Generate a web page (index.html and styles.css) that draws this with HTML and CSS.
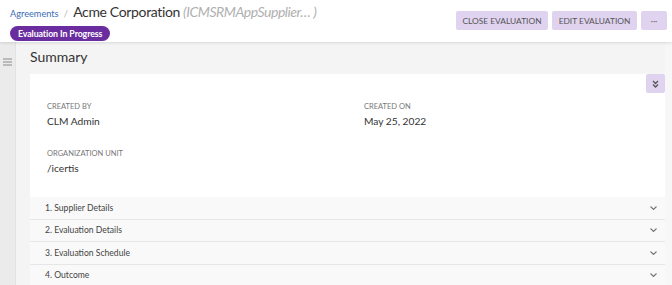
FILE: index.html
```html
<!DOCTYPE html>
<html lang="en">
<head>
    <meta charset="UTF-8">
    <title>Acme Corporation - Evaluation</title>
    <link rel="stylesheet" href="styles.css">
</head>
<body>
    <div class="header">
        <div class="title-block">
            <div class="crumbs">
                <a class="crumb-link" href="#">Agreements</a>
                <span class="crumb-sep">/</span>
                <span class="crumb-title">Acme Corporation</span>
                <span class="crumb-code">(ICMSRMAppSupplier… )</span>
            </div>
            <span class="status">Evaluation In Progress</span>
        </div>
        <div class="actions">
            <button class="btn close">CLOSE EVALUATION</button>
            <button class="btn edit">EDIT EVALUATION</button>
            <button class="btn more">&middot;&middot;&middot;</button>
        </div>
    </div>

    <div class="page">
        <div class="sidebar">
            <svg class="burger" width="9" height="8" viewBox="0 0 9 8">
                <path d="M0 1h9M0 4h9M0 7h9" stroke="#8a8a8a" stroke-width="1"/>
            </svg>
        </div>
        <div class="main">
            <h1 class="page-title">Summary</h1>
            <div class="card">
                <button class="collapse-all">
                    <svg width="7" height="8" viewBox="0 0 7 8">
                        <path d="M1 1l2.5 2.5L6 1M1 4.5L3.5 7 6 4.5" fill="none" stroke="#555" stroke-width="1.3"/>
                    </svg>
                </button>
                <div class="fields">
                    <div class="field">
                        <div class="label">CREATED BY</div>
                        <div class="value">CLM Admin</div>
                    </div>
                    <div class="field">
                        <div class="label">CREATED ON</div>
                        <div class="value">May 25, 2022</div>
                    </div>
                    <div class="field">
                        <div class="label">ORGANIZATION UNIT</div>
                        <div class="value">/icertis</div>
                    </div>
                </div>
            </div>
            <div class="sections">
                <div class="section"><span>1. Supplier Details</span><svg class="chev" width="7" height="4" viewBox="0 0 7 4"><path d="M0.5 0.5l3 3 3-3" fill="none" stroke="#777" stroke-width="1.1"/></svg></div>
                <div class="section"><span>2. Evaluation Details</span><svg class="chev" width="7" height="4" viewBox="0 0 7 4"><path d="M0.5 0.5l3 3 3-3" fill="none" stroke="#777" stroke-width="1.1"/></svg></div>
                <div class="section"><span>3. Evaluation Schedule</span><svg class="chev" width="7" height="4" viewBox="0 0 7 4"><path d="M0.5 0.5l3 3 3-3" fill="none" stroke="#777" stroke-width="1.1"/></svg></div>
                <div class="section"><span>4. Outcome</span><svg class="chev" width="7" height="4" viewBox="0 0 7 4"><path d="M0.5 0.5l3 3 3-3" fill="none" stroke="#777" stroke-width="1.1"/></svg></div>
            </div>
        </div>
        <div class="scroll-track"></div>
    </div>
</body>
</html>
```

FILE: styles.css
```css
body {
    margin: 0;
    font-family: Lato, "Open Sans", sans-serif;
    color: #333;
    background: #f4f4f4;
    height: 285px;
    overflow: hidden;
}
.header {
    display: flex;
    justify-content: space-between;
    height: 42px;
    background: #fff;
    box-shadow: 0 1px 3px rgba(0, 0, 0, 0.12);
    position: relative;
    z-index: 2;
}
.title-block {
    padding: 3px 0 0 10px;
}
.crumbs {
    display: flex;
    align-items: baseline;
    height: 18px;
    white-space: nowrap;
}
.crumb-link {
    color: #3b6db3;
    font-size: 9.2px;
    text-decoration: none;
}
.crumb-sep {
    color: #bbb;
    font-size: 10px;
    margin: 0 5px 0 5px;
}
.crumb-title {
    font-size: 14px;
    letter-spacing: -0.35px;
    color: #333;
}
.crumb-code {
    font-size: 14px;
    font-style: italic;
    color: #b0b0b0;
    letter-spacing: -0.45px;
    margin-left: 3px;
}
.status {
    display: inline-block;
    background: #6a2d9f;
    color: #fff;
    font-size: 8.8px;
    font-weight: bold;
    height: 15px;
    line-height: 15px;
    padding: 0 8px;
    border-radius: 8px;
    white-space: nowrap;
    letter-spacing: -0.1px;
}
.actions {
    display: flex;
    gap: 4px;
    padding: 11px 5px 0 0;
}
.btn {
    height: 19px;
    border: none;
    border-radius: 2px;
    background: #e0d3f0;
    color: #555;
    font-family: inherit;
    font-size: 8.4px;
    padding: 0;
    white-space: nowrap;
    cursor: pointer;
}
.btn.close {
    width: 92px;
}
.btn.edit {
    width: 85px;
}
.btn.more {
    width: 26px;
}
.page {
    display: flex;
    height: 243px;
}
.sidebar {
    width: 16px;
    background: #ebebeb;
    border-right: 1px solid #e2e2e2;
    display: flex;
    justify-content: center;
    padding-top: 16px;
    box-sizing: border-box;
}
.main {
    flex: 1;
    padding-left: 14px;
}
.page-title {
    margin: 0;
    font-size: 14px;
    font-weight: normal;
    color: #333;
    height: 32px;
    line-height: 30px;
}
.card {
    background: #fff;
    position: relative;
    height: 123px;
    padding: 28px 0 0 17px;
    box-sizing: border-box;
}
.collapse-all {
    position: absolute;
    top: 0;
    right: 0;
    width: 19px;
    height: 19px;
    border: none;
    border-radius: 2px;
    background: #e0d3f0;
    padding: 0;
    display: flex;
    align-items: center;
    justify-content: center;
}
.fields {
    display: grid;
    grid-template-columns: 317px 1fr;
    row-gap: 22px;
}
.label {
    font-size: 7.5px;
    color: #777;
    margin-bottom: 4px;
}
.value {
    font-size: 10.2px;
    color: #333;
}
.section {
    display: flex;
    justify-content: space-between;
    align-items: center;
    height: 22.5px;
    background: #f9f9f9;
    border-bottom: 1px solid #e6e6e6;
    padding: 0 8px 0 15px;
    font-size: 8.6px;
    color: #444;
    box-sizing: border-box;
}
.scroll-track {
    width: 7px;
    background: #f7f7f7;
}
```
